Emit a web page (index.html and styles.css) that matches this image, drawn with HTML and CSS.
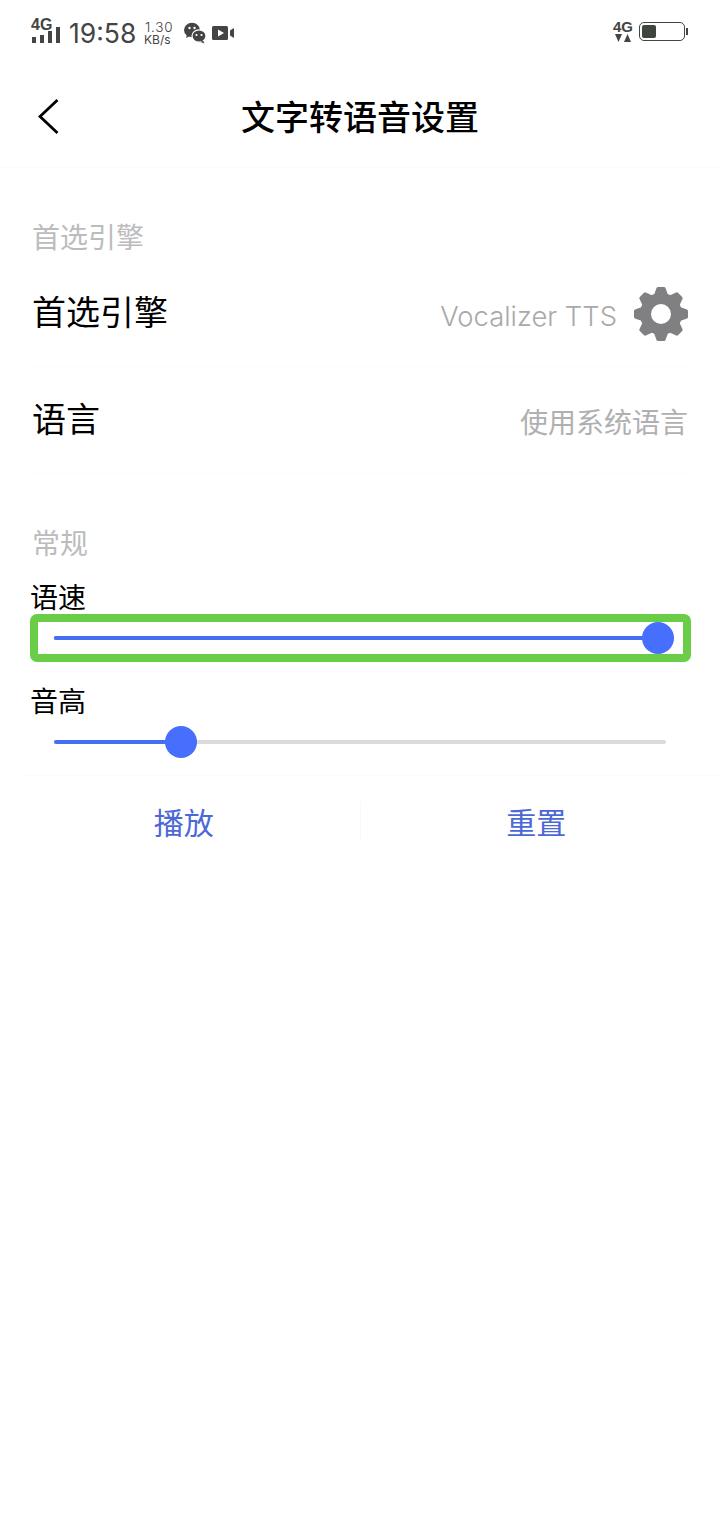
FILE: index.html
```html
<!DOCTYPE html>
<html lang="zh-CN">
<head>
    <meta charset="UTF-8">
    <meta name="viewport" content="width=device-width, initial-scale=1.0">
    <title>文字转语音设置</title>
    <link rel="stylesheet" href="styles.css">
</head>
<body>
    <div class="status-bar">
        <div class="status-left">
            <div class="signal">
                <span class="signal-label">4G</span>
                <svg class="signal-bars" viewBox="0 0 28 16" width="28" height="16">
                    <rect x="0" y="10" width="4" height="6" fill="#444"/>
                    <rect x="8" y="8" width="4" height="8" fill="#444"/>
                    <rect x="16" y="4" width="4" height="12" fill="#444"/>
                    <rect x="24" y="0" width="4" height="16" fill="#444"/>
                </svg>
            </div>
            <span class="clock">19:58</span>
            <div class="speed"><span class="speed-num">1.30</span><span>KB/s</span></div>
            <svg class="wechat" viewBox="0 0 22 22" width="22" height="22">
                <ellipse cx="8" cy="8" rx="8" ry="7.2" fill="#444"/>
                <path d="M3 12l-1 4 4-2z" fill="#444"/>
                <ellipse cx="15" cy="14" rx="7" ry="6.2" fill="#444" stroke="#fff" stroke-width="1.2"/>
                <path d="M19 18.500l1.500 3-4-1.500z" fill="#444"/>
                <circle cx="5.500" cy="6" r="1.200" fill="#fff"/>
                <circle cx="10.500" cy="6" r="1.200" fill="#fff"/>
                <circle cx="12.500" cy="13" r="1.100" fill="#fff"/>
                <circle cx="17.500" cy="13" r="1.100" fill="#fff"/>
            </svg>
            <svg class="video" viewBox="0 0 22 16" width="22" height="16">
                <rect x="0" y="1" width="16" height="14" rx="1.500" fill="#444"/>
                <path d="M6 4.500v7l6-3.500z" fill="#fff"/>
                <path d="M18 5.500l4-2.500v10l-4-2.500z" fill="#444"/>
            </svg>
        </div>
        <div class="status-right">
            <div class="net">
                <span class="net-label">4G</span>
                <svg viewBox="0 0 18 8" width="18" height="8">
                    <path d="M1 0h7l-3.500 8z" fill="#444"/>
                    <path d="M13.500 0l3.500 8h-7z" fill="#444"/>
                </svg>
            </div>
            <div class="battery"><div class="battery-fill"></div></div>
            <div class="battery-cap"></div>
        </div>
    </div>

    <header class="top-bar">
        <svg class="back" viewBox="0 0 22 38" width="22" height="38">
            <path d="M19.500 2L2 18.500 19.500 35" fill="none" stroke="#000" stroke-width="2.800"/>
        </svg>
        <h1>文字转语音设置</h1>
    </header>

    <main class="content">
        <div class="section-title first">首选引擎</div>
        <div class="row row-engine">
            <span class="row-name">首选引擎</span>
            <div class="row-right">
                <span class="engine-name">Vocalizer TTS</span>
                <svg class="gear" viewBox="0 0 56 56" width="56" height="56">
                    <defs>
                        <path id="gear-tooth" d="M21 9L23.500 2Q24 1 25 1H31Q32 1 32.500 2L35 9z" fill="#808083"/>
                    </defs>
                    <circle cx="28" cy="28" r="15.500" fill="none" stroke="#808083" stroke-width="11"/>
                    <use href="#gear-tooth"/>
                    <use href="#gear-tooth" transform="rotate(45 28 28)"/>
                    <use href="#gear-tooth" transform="rotate(90 28 28)"/>
                    <use href="#gear-tooth" transform="rotate(135 28 28)"/>
                    <use href="#gear-tooth" transform="rotate(180 28 28)"/>
                    <use href="#gear-tooth" transform="rotate(225 28 28)"/>
                    <use href="#gear-tooth" transform="rotate(270 28 28)"/>
                    <use href="#gear-tooth" transform="rotate(315 28 28)"/>
                </svg>
            </div>
        </div>
        <div class="row row-lang">
            <span class="row-name">语言</span>
            <span class="row-value">使用系统语言</span>
        </div>

        <div class="section-title second">常规</div>
        <div class="slider-label">语速</div>
        <div class="highlight">
            <div class="slider">
                <div class="slider-track"></div>
                <div class="slider-done" style="width: 604px"></div>
                <div class="slider-thumb" style="left: 588px"></div>
            </div>
        </div>
        <div class="divider-thin"></div>
        <div class="slider-label pitch">音高</div>
        <div class="slider pitch-slider">
            <div class="slider-track"></div>
            <div class="slider-done" style="width: 127px"></div>
            <div class="slider-thumb" style="left: 111px"></div>
        </div>
    </main>

    <div class="actions-line"></div>
    <div class="actions">
        <div class="action">播放</div>
        <div class="action-sep"></div>
        <div class="action">重置</div>
    </div>
</body>
</html>
```

FILE: styles.css
```css
* {
    box-sizing: border-box;
}
body {
    margin: 0;
    width: 720px;
    height: 1520px;
    overflow: hidden;
    background-color: #fff;
    color: #000;
    font-family: 'Noto Sans CJK SC', 'Inter', sans-serif;
}
.status-bar {
    height: 66px;
    display: flex;
    justify-content: space-between;
    padding: 17px 32px 0 32px;
    color: #444;
}
.status-left {
    display: flex;
    align-items: flex-start;
}
.signal {
    width: 28px;
    height: 27px;
    position: relative;
}
.signal-label {
    display: block;
    margin-left: -1px;
    font-family: 'Liberation Sans', sans-serif;
    font-size: 16px;
    font-weight: bold;
    line-height: 15px;
}
.signal-bars {
    position: absolute;
    left: 0;
    top: 10px;
}
.clock {
    margin-left: 9px;
    font-family: 'Inter', sans-serif;
    font-size: 26.500px;
    line-height: 33px;
    width: 67px;
}
.speed {
    margin-left: 8px;
    width: 31px;
    display: flex;
    flex-direction: column;
    font-family: 'Inter', sans-serif;
    font-size: 12px;
    line-height: 12px;
    padding-top: 3px;
}
.speed-num {
    font-size: 13.500px;
    line-height: 14px;
    font-weight: 300;
    letter-spacing: 0.800px;
    margin-left: 1px;
}
.wechat {
    margin: 5px 0 0 9px;
}
.video {
    margin: 8px 0 0 6px;
}
.status-right {
    display: flex;
    align-items: flex-start;
}
.net {
    width: 20px;
    display: flex;
    flex-direction: column;
    align-items: center;
    margin-top: 3px;
}
.net-label {
    font-family: 'Liberation Sans', sans-serif;
    font-size: 15px;
    font-weight: bold;
    line-height: 14px;
}
.battery {
    margin: 5px 0 0 6px;
    width: 46px;
    height: 19px;
    border: 1px solid #444;
    border-radius: 5px;
    padding: 2px;
}
.battery-fill {
    width: 14px;
    height: 13px;
    border-radius: 2px;
    background-color: #3e463f;
}
.battery-cap {
    margin: 11px 0 0 1px;
    width: 2px;
    height: 7px;
    background-color: #444;
}
.top-bar {
    height: 102px;
    position: relative;
    display: flex;
    justify-content: center;
    border-bottom: 1px solid #fcfafb;
}
.top-bar h1 {
    margin: 0;
    font-size: 34px;
    font-weight: 500;
    line-height: 99px;
}
.back {
    position: absolute;
    left: 38px;
    top: 32px;
}
.content {
    padding: 0 32px 0 30px;
}
.section-title {
    font-size: 28px;
    line-height: 40px;
    color: #bcbcbc;
    padding-left: 2px;
}
.section-title.first {
    margin-top: 48px;
}
.section-title.second {
    margin-top: 48px;
}
.row {
    display: flex;
    justify-content: space-between;
    align-items: center;
    border-bottom: 1px solid #fcfafb;
    padding-left: 2px;
}
.row-engine {
    height: 111px;
}
.row-lang {
    height: 107px;
}
.row-lang .row-name {
    margin-top: -4px;
}
.row-name {
    font-size: 34px;
    line-height: 46px;
}
.row-right {
    display: flex;
    align-items: center;
    margin-right: -1px;
    margin-top: 5px;
}
.engine-name {
    font-family: 'Inter', sans-serif;
    font-weight: 300;
    font-size: 27.400px;
    color: #a9a9a9;
    margin-top: 4px;
}
.gear {
    margin-left: 16px;
}
.row-value {
    font-size: 28px;
    color: #b0b0b0;
    margin-top: 1px;
}
.slider-label {
    margin-top: 14px;
    font-size: 28px;
    line-height: 40px;
}
.slider-label.pitch {
    margin-top: 8px;
}
.highlight {
    margin-top: -2px;
    width: 661px;
    height: 48px;
    border: 8px solid #6acd48;
    border-radius: 7px;
    padding: 0 16px;
}
.slider {
    position: relative;
    height: 32px;
}
.pitch-slider {
    margin-top: 6px;
    margin-left: 24px;
    width: 612px;
}
.slider-track {
    position: absolute;
    left: 0;
    right: 0;
    top: 14px;
    height: 4px;
    border-radius: 2px;
    background-color: #dbdadc;
}
.highlight .slider-track {
    background-color: #456ef0;
}
.slider-done {
    position: absolute;
    left: 0;
    top: 14px;
    height: 4px;
    border-radius: 2px;
    background-color: #456ef0;
}
.slider-thumb {
    position: absolute;
    top: 0;
    width: 32px;
    height: 32px;
    border-radius: 50%;
    background-color: #456ffc;
}
.divider-thin {
    height: 1px;
    margin-top: 9px;
    background-color: #fcfafb;
}
.actions-line {
    margin: 17px 0 0 22px;
    height: 1px;
    background-color: #fcfafb;
}
.actions {
    margin-top: 13px;
    height: 64px;
    display: flex;
    align-items: center;
}
.action {
    flex: 1;
    text-align: center;
    font-size: 30px;
    color: #4c68d8;
}
.action:first-child {
    padding-left: 8px;
}
.action:last-child {
    padding-right: 8px;
}
.action-sep {
    width: 1px;
    height: 40px;
    background-color: #f9f9f9;
}
```
